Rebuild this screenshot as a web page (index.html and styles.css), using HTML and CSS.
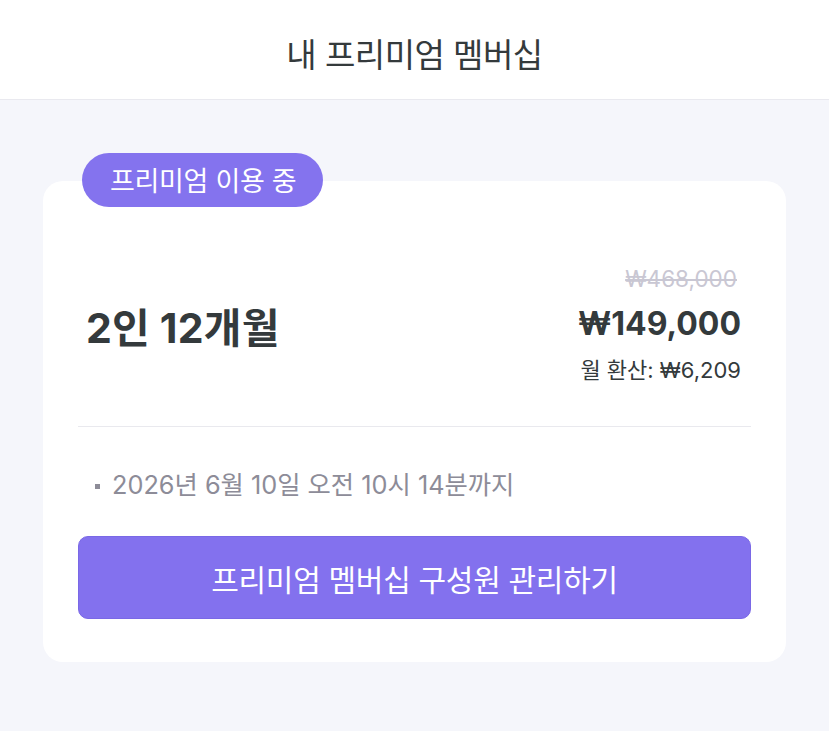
FILE: index.html
```html
<!DOCTYPE html>
<html lang="ko">
<head>
<meta charset="utf-8">
<link rel="stylesheet" href="styles.css">
</head>
<body>
<header class="topbar">
  <h1 class="topbar-title">내 프리미엄 멤버십</h1>
</header>
<main class="content">
  <section class="card">
    <span class="badge">프리미엄 이용 중</span>
    <div class="plan-row">
      <div class="plan-name">2인 12개월</div>
      <div class="prices">
        <div class="price-old">₩468,000</div>
        <div class="price-now">₩149,000</div>
        <div class="price-month">월 환산: ₩6,209</div>
      </div>
    </div>
    <hr class="divider">
    <ul class="info-list">
      <li>2026년 6월 10일 오전 10시 14분까지</li>
    </ul>
    <button class="manage-btn" type="button">프리미엄 멤버십 구성원 관리하기</button>
  </section>
</main>
</body>
</html>
```
FILE: styles.css
```css
* { box-sizing: border-box; }
html, body { margin: 0; padding: 0; background: #ffffff; }
body {
  font-family: "Noto Sans CJK KR", "Noto Sans", sans-serif;
  color: #343a3c;
}
.topbar {
  height: 100px;
  display: flex;
  align-items: center;
  justify-content: center;
  background: #ffffff;
  border-bottom: 1px solid #e9e9ef;
}
.topbar-title {
  margin: 0;
  font-size: 33px;
  font-weight: 400;
  color: #343a3c;
  letter-spacing: -0.5px;
  padding-top: 6px;
}
.content {
  background: #f5f6fb;
  height: 631px;
  padding: 81px 43px 0 43px;
}
.card {
  position: relative;
  background: #ffffff;
  border-radius: 20px;
  padding: 84px 35px 43px 35px;
}
.badge {
  position: absolute;
  top: -28px;
  left: 39px;
  height: 54px;
  padding: 0 27px 0 28px;
  border-radius: 27px;
  background: #8473ee;
  color: #ffffff;
  font-size: 27px;
  line-height: 54px;
  letter-spacing: -0.3px;
}
.plan-row {
  display: flex;
  align-items: center;
  justify-content: space-between;
  padding: 0 10px 0 8px;
}
.plan-name {
  font-family: "Inter", "Noto Sans CJK KR", sans-serif;
  font-size: 41px;
  font-weight: 700;
  letter-spacing: 0.2px;
  color: #343a3c;
}
.prices {
  text-align: right;
  display: flex;
  flex-direction: column;
  align-items: flex-end;
}
.price-old {
  font-family: "Inter", "Noto Sans CJK KR", sans-serif;
  font-size: 22.5px;
  line-height: 28px;
  color: #c9c7d3;
  text-decoration: line-through;
  margin-right: 4px;
}
.price-now {
  font-family: "Inter", "Noto Sans CJK KR", sans-serif;
  font-size: 32px;
  font-weight: 700;
  line-height: 40px;
  margin-top: 11px;
  color: #343a3c;
}
.price-month {
  font-family: "Inter", "Noto Sans CJK KR", sans-serif;
  font-size: 22px;
  line-height: 28px;
  margin-top: 12px;
  color: #343a3c;
}
.divider {
  border: 0;
  height: 1px;
  background: #e9e9ee;
  margin: 42px 0 0 0;
}
.info-list {
  list-style: none;
  margin: 43px 0 0 0;
  padding: 0 0 0 17px;
}
.info-list li {
  position: relative;
  font-family: "Inter", "Noto Sans CJK KR", sans-serif;
  font-size: 25.3px;
  line-height: 30px;
  color: #8d8c98;
  padding-left: 17px;
}
.info-list li::before {
  content: "";
  position: absolute;
  left: 0;
  top: 14px;
  width: 5px;
  height: 5px;
  background: #8d8c98;
}
.manage-btn {
  display: block;
  width: 100%;
  height: 83px;
  margin-top: 36px;
  border: 1px solid #7a68e6;
  border-radius: 10px;
  background: #8371ee;
  color: #ffffff;
  font-family: "Noto Sans CJK KR", "Noto Sans", sans-serif;
  font-size: 30px;
  letter-spacing: -0.3px;
  cursor: pointer;
}
```
